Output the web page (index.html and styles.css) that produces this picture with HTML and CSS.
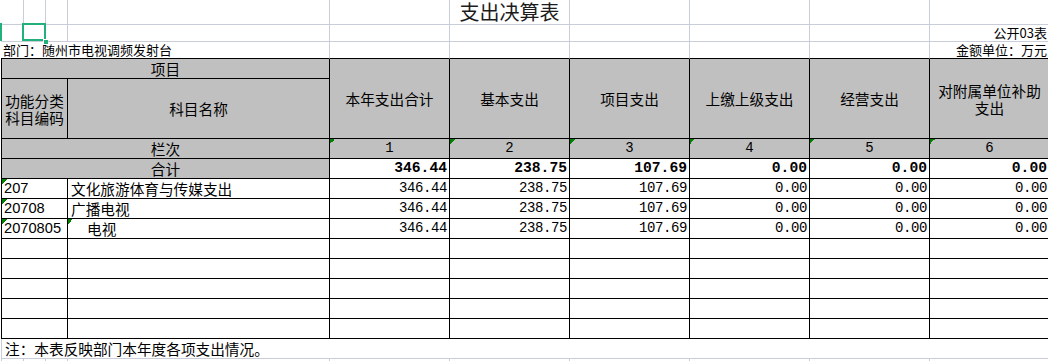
FILE: index.html
```html
<!DOCTYPE html>
<html lang="zh-CN">
<head>
<meta charset="utf-8">
<title>支出决算表</title>
<link rel="stylesheet" href="styles.css">
</head>
<body>
<div class="sheet">
  <table class="grid">
    <colgroup>
      <col class="c-a"><col class="c-b"><col class="c-c"><col class="c-d">
      <col class="c-n"><col class="c-n"><col class="c-n"><col class="c-n"><col class="c-n"><col class="c-n">
    </colgroup>
    <tbody>
      <tr class="r-title">
        <td class="g"></td><td class="g"></td><td class="g"></td><td class="g"></td><td class="g"></td>
        <td class="g title">支出决算表</td><td class="g"></td><td class="g"></td><td class="g"></td><td class="g"></td>
      </tr>
      <tr class="r-small">
        <td class="g"></td><td class="g"></td><td class="g"></td><td class="g"></td><td class="g"></td>
        <td class="g"></td><td class="g"></td><td class="g"></td><td class="g"></td><td class="g label right">公开03表</td>
      </tr>
      <tr class="r-small">
        <td class="g tb label" colspan="4">部门：随州市电视调频发射台</td>
        <td class="g tb"></td><td class="g tb"></td><td class="g tb"></td><td class="g tb"></td><td class="g tb"></td>
        <td class="g tb label right">金额单位：万元</td>
      </tr>
      <tr class="r-row">
        <td class="h first" colspan="4">项目</td>
        <td class="h" rowspan="2">本年支出合计</td>
        <td class="h" rowspan="2">基本支出</td>
        <td class="h" rowspan="2">项目支出</td>
        <td class="h" rowspan="2">上缴上级支出</td>
        <td class="h" rowspan="2">经营支出</td>
        <td class="h" rowspan="2">对附属单位补助支出</td>
      </tr>
      <tr class="r-head">
        <td class="h first" colspan="3">功能分类科目编码</td>
        <td class="h">科目名称</td>
      </tr>
      <tr class="r-row">
        <td class="h first" colspan="4">栏次</td>
        <td class="h mark idx">1</td><td class="h mark idx">2</td><td class="h mark idx">3</td>
        <td class="h mark idx">4</td><td class="h mark idx">5</td><td class="h mark idx">6</td>
      </tr>
      <tr class="r-row">
        <td class="h first" colspan="4">合计</td>
        <td class="n total">346.44</td><td class="n total">238.75</td><td class="n total">107.69</td>
        <td class="n total">0.00</td><td class="n total">0.00</td><td class="n total">0.00</td>
      </tr>
      <tr class="r-row">
        <td class="first code mark" colspan="3">207</td>
        <td class="name">文化旅游体育与传媒支出</td>
        <td class="n">346.44</td><td class="n">238.75</td><td class="n">107.69</td>
        <td class="n">0.00</td><td class="n">0.00</td><td class="n">0.00</td>
      </tr>
      <tr class="r-row">
        <td class="first code mark" colspan="3">20708</td>
        <td class="name">广播电视</td>
        <td class="n">346.44</td><td class="n">238.75</td><td class="n">107.69</td>
        <td class="n">0.00</td><td class="n">0.00</td><td class="n">0.00</td>
      </tr>
      <tr class="r-row">
        <td class="first code mark" colspan="3">2070805</td>
        <td class="name mark indent">电视</td>
        <td class="n">346.44</td><td class="n">238.75</td><td class="n">107.69</td>
        <td class="n">0.00</td><td class="n">0.00</td><td class="n">0.00</td>
      </tr>
      <tr class="r-row"><td class="first" colspan="3"></td><td></td><td></td><td></td><td></td><td></td><td></td><td></td></tr>
      <tr class="r-row"><td class="first" colspan="3"></td><td></td><td></td><td></td><td></td><td></td><td></td><td></td></tr>
      <tr class="r-row"><td class="first" colspan="3"></td><td></td><td></td><td></td><td></td><td></td><td></td><td></td></tr>
      <tr class="r-row"><td class="first" colspan="3"></td><td></td><td></td><td></td><td></td><td></td><td></td><td></td></tr>
      <tr class="r-row"><td class="first" colspan="3"></td><td></td><td></td><td></td><td></td><td></td><td></td><td></td></tr>
      <tr class="r-row">
        <td class="g gl note" colspan="10">注：本表反映部门本年度各项支出情况。</td>
      </tr>
      <tr class="r-row">
        <td class="g gl"></td><td class="g"></td><td class="g"></td><td class="g"></td><td class="g"></td>
        <td class="g"></td><td class="g"></td><td class="g"></td><td class="g"></td><td class="g"></td>
      </tr>
    </tbody>
  </table>
  <div class="row-mark"></div>
  <div class="sel"><span class="handle"></span></div>
</div>
</body>
</html>
```
FILE: styles.css
```css
html, body {
  margin: 0;
  padding: 0;
  background: #ffffff;
  overflow: hidden;
}

body {
  width: 1048px;
  height: 361px;
  font-family: "Noto Sans CJK SC", "Liberation Sans", sans-serif;
  color: #000000;
}

.sheet {
  position: relative;
  padding-left: 1px;
}

.grid {
  border-collapse: separate;
  border-spacing: 0;
  table-layout: fixed;
  width: 1049px;
}

.c-a { width: 23px; }
.c-b { width: 22px; }
.c-c { width: 22px; }
.c-d { width: 262px; }
.c-n { width: 120px; }

td {
  box-sizing: border-box;
  padding: 0 2px 1px 2px;
  border-right: 1px solid #000000;
  border-bottom: 1px solid #000000;
  overflow: visible;
  white-space: nowrap;
  vertical-align: bottom;
  font-size: 14.67px;
  line-height: 17px;
}

td.first { border-left: 1px solid #000000; }

.r-title td { height: 25px; }
.r-small td { height: 17px; }
.r-row td { height: 20px; }
.r-head td { height: 60px; }

/* light sheet gridlines */
td.g {
  border-right-color: #c9ccd9;
  border-bottom-color: #c9ccd9;
}
td.g.tb { border-bottom-color: #000000; }
td.gl { border-left: 1px solid #c9ccd9; }

.title {
  font-size: 20px;
  line-height: 22px;
  text-align: center;
  vertical-align: middle;
  color: #1c1c1c;
  padding: 0;
}

.label {
  font-size: 13px;
  line-height: 15px;
  padding-bottom: 1px;
}
.right { text-align: right; }

/* header cells */
.h {
  background-color: #c0c0c0;
  text-align: center;
  vertical-align: middle;
  white-space: normal;
  padding: 0 2px;
}
.idx {
  font-family: "Liberation Mono", monospace;
  font-size: 14px;
}

/* "number stored as text" markers */
.mark {
  background-image: linear-gradient(135deg, #008000 50%, transparent 50%);
  background-size: 5px 5px;
  background-repeat: no-repeat;
  background-position: 0 0;
}

.n {
  text-align: right;
  font-family: "Liberation Mono", monospace;
  font-size: 14px;
  letter-spacing: -0.4px;
}
.n.total {
  font-weight: bold;
  font-size: 14.67px;
  letter-spacing: 0;
}

.code {
  font-family: "Liberation Sans", sans-serif;
  font-size: 14.67px;
}
.name { padding-left: 3px; }
.indent { padding-left: 19px; }

.note {
  padding-left: 3px;
}

/* selection overlay */
.row-mark {
  position: absolute;
  left: 0;
  top: 23px;
  width: 2px;
  height: 18px;
  background: #22b07b;
}
.sel {
  position: absolute;
  left: 22px;
  top: 23px;
  width: 24px;
  height: 18px;
  box-sizing: border-box;
  border: 2px solid #22b07b;
}
.handle {
  position: absolute;
  left: 19px;
  top: 14px;
  width: 5px;
  height: 5px;
  background: #22b07b;
  border-left: 1px solid #ffffff;
  border-top: 1px solid #ffffff;
  box-sizing: border-box;
}
```
